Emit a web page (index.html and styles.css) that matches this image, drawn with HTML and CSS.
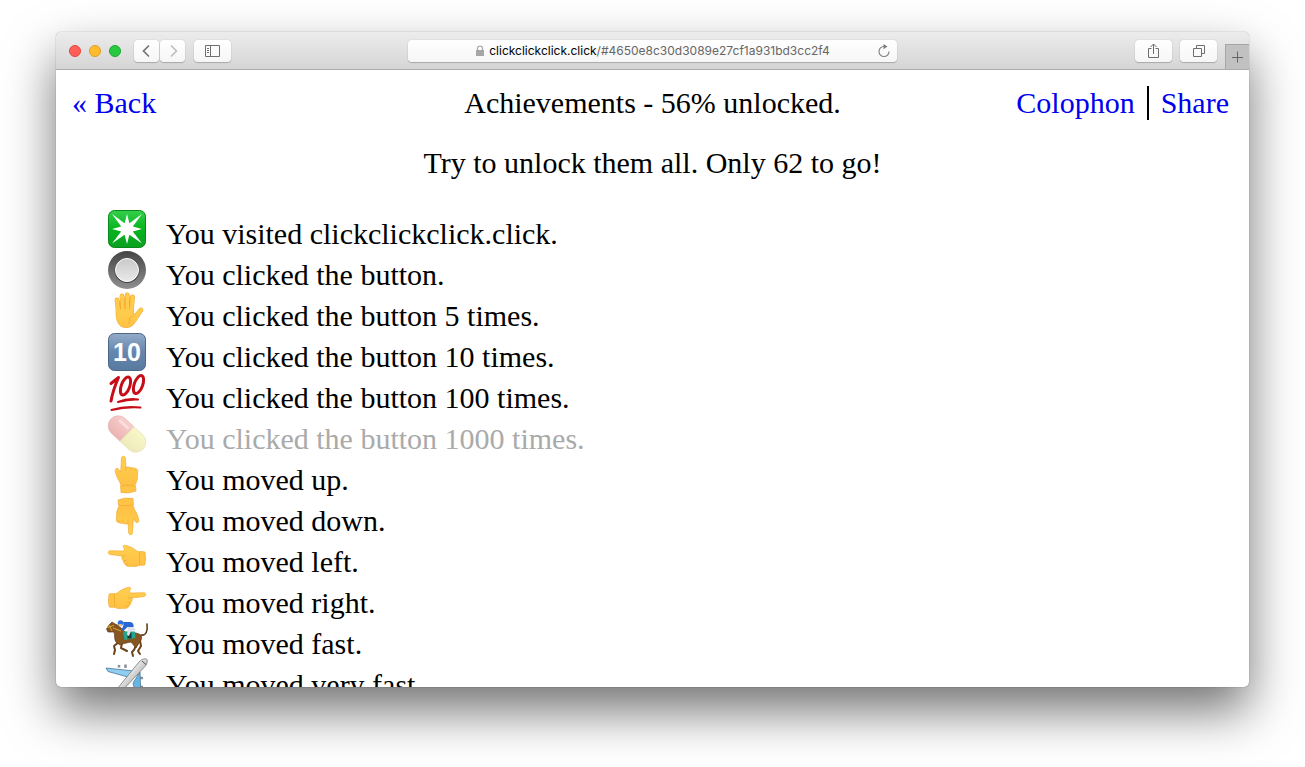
FILE: index.html
```html
<!DOCTYPE html>
<html lang="en">
<head>
  <meta charset="UTF-8" />
  <meta name="viewport" content="width=device-width, initial-scale=1.0">
  <title>Achievements</title>
  <link rel="stylesheet" href="styles.css">
</head>
<body>
  <div class="window">
    <!-- Browser toolbar -->
    <header class="toolbar">
      <div class="tools">
        <div class="lights">
          <span class="light red"></span>
          <span class="light yellow"></span>
          <span class="light green"></span>
        </div>
        <div class="history">
          <button class="tool small" aria-label="Back"><svg width="25" height="22" viewBox="0 0 25 22"><path d="M15 5.500L9.500 11l5.500 5.500" stroke="#6e6e6e" stroke-width="1.600"/></svg></button>
          <button class="tool small" aria-label="Forward"><svg width="25" height="22" viewBox="0 0 25 22"><path d="M11 5.500L16.500 11 11 16.500" stroke="#bdbdbd" stroke-width="1.600"/></svg></button>
        </div>
        <button class="tool" aria-label="Sidebar"><svg width="37" height="22" viewBox="0 0 37 22"><path d="M11.500 5.500h14v11h-14zM16.500 5.500v11M13 8.500h2M13 10.500h2M13 12.500h2" stroke="#6e6e6e"/></svg></button>
      </div>
      <button class="address">
        <svg width="10" height="12" viewBox="0 0 10 12"><path d="M2.500 6V3.500a2.500 2.500 0 0 1 5 0V6" stroke="#a6a6a6" stroke-width="1.200"/><path d="M1 5h8v6H1z" fill="#a6a6a6"/></svg>
        <span>clickclickclick.click<span class="path">/#4650e8c30d3089e27cf1a931bd3cc2f4</span></span>
        <svg class="reload" width="14" height="14" viewBox="0 0 14 14"><path d="M7 2.500a5 5 0 1 0 5 5" stroke="#7d7d7d" stroke-width="1.100"/><path d="M6.500 0l4 2.500-4 2.700z" fill="#7d7d7d"/></svg>
      </button>
      <div class="tools right">
        <button class="tool" aria-label="Share"><svg width="37" height="22" viewBox="0 0 37 22"><path d="M16.500 8.500h-3v9h10v-9h-3M18.500 14V4M15.500 7l3-3 3 3" stroke="#6e6e6e"/></svg></button>
        <button class="tool" aria-label="Tabs"><svg width="37" height="22" viewBox="0 0 37 22"><path d="M13.500 8.500h8v8h-8zM16.500 8V5.500h8v8H22" stroke="#6e6e6e"/></svg></button>
        <button class="new-tab" aria-label="New tab"><svg width="23" height="24" viewBox="0 0 23 24"><path d="M11.500 6.500v11M6 12.500h11" stroke="#666"/></svg></button>
      </div>
    </header>

    <!-- Page -->
    <main class="page">
      <div class="page-header">
        <a href="#back">« Back</a>
        <h1>Achievements - 56% unlocked.</h1>
        <nav>
          <a href="#colophon">Colophon</a>
          <span class="divider"></span>
          <a href="#share">Share</a>
        </nav>
      </div>
      <p class="intro">Try to unlock them all. Only 62 to go!</p>

      <ul class="achievements">
        <li>
          <svg class="icon" viewBox="0 0 44 41">
            <rect x="3.500" y="1.500" width="37" height="37" rx="6" fill="url(#green)" stroke="#078a1b"/>
            <path d="M22 5l2.400 9.200L37 5l-9.200 12.600L37 20l-9.200 2.400L37 34.500l-12.600-8.700L22 35l-2.400-9.200L7 34.500l9.200-12.100L7 20l9.200-2.400L7 5l12.600 9.200z" fill="#fff"/>
          </svg>
          <span>You visited clickclickclick.click.</span>
        </li>
        <li>
          <svg class="icon" viewBox="0 0 44 41">
            <circle cx="22" cy="20" r="19" fill="url(#ring)"/>
            <circle cx="22" cy="20.500" r="12.500" fill="#444"/>
            <circle cx="22" cy="20" r="11.500" fill="url(#knob)" stroke="#fff"/>
          </svg>
          <span>You clicked the button.</span>
        </li>
        <li>
          <svg class="icon" viewBox="0 0 44 41">
            <g stroke="#eda42a" stroke-width="4.800" stroke-linecap="round"><path d="M12 9l2 15M17 5l1 17M22.300 4v18M27.500 6L26 23M36 19l-6 7"/></g>
            <path d="M11 18c0 7 0 12 3.500 16 3 3.500 10 3.500 13.500 0 3-3 5.500-8 8.500-12.500L29 23l-1.500-5z" fill="url(#skin)" stroke="#eda42a" stroke-width=".6"/>
            <g stroke="#ffcb4d" stroke-width="4" stroke-linecap="round"><path d="M12 9l2 15M17 5l1 17M22.300 4v18M27.500 6L26 23M36 19l-6 7"/></g>
            <path d="M14.700 10l.8 8M19.700 6l.2 12M25 6l-.3 12M24 33c0-5 2-8 5-9" stroke="#eda42a" stroke-width=".7"/>
          </svg>
          <span>You clicked the button 5 times.</span>
        </li>
        <li>
          <svg class="icon" viewBox="0 0 44 41">
            <rect x="3.500" y="1.500" width="37" height="37" rx="6" fill="url(#blue)" stroke="#4a6788"/>
            <text class="ten" x="22" y="29" text-anchor="middle">10</text>
          </svg>
          <span>You clicked the button 10 times.</span>
        </li>
        <li>
          <svg class="icon" viewBox="0 0 44 41">
            <g stroke="#c70d17" stroke-linecap="round" stroke-linejoin="round">
              <path d="M6 10.500l7.500-6Q8 17 6 28" stroke-width="3"/>
              <ellipse cx="20.500" cy="13" rx="4.200" ry="9.500" transform="rotate(20 20.500 13)" stroke-width="3"/>
              <ellipse cx="33.500" cy="11.500" rx="4.200" ry="9.500" transform="rotate(20 33.500 11.500)" stroke-width="3"/>
              <path d="M13 29q10-4 20-2.500-9-.5-20 2.500M6.500 37q14-4.500 29-2.500-15-1-29 2.500" stroke-width="2"/>
            </g>
          </svg>
          <span>You clicked the button 100 times.</span>
        </li>
        <li class="locked">
          <svg class="icon" viewBox="0 0 44 41">
            <g transform="translate(22 20) rotate(43)">
              <path d="M0-10h-12a10 10 0 0 0 0 20H0z" fill="url(#pillred)" stroke="#b64a48" stroke-width=".7"/>
              <path d="M0-10h12a10 10 0 0 1 0 20H0z" fill="url(#pillyellow)" stroke="#b9b04a" stroke-width=".7"/>
              <path d="M-14-5h10" stroke="#fff" stroke-width="3" stroke-linecap="round" opacity=".4"/>
            </g>
          </svg>
          <span>You clicked the button 1000 times.</span>
        </li>
        <li>
          <svg class="icon" viewBox="0 0 44 41"><use href="#point-up"/></svg>
          <span>You moved up.</span>
        </li>
        <li>
          <svg class="icon" viewBox="0 0 44 41"><use href="#point-up" transform="rotate(180 22 20)"/></svg>
          <span>You moved down.</span>
        </li>
        <li>
          <svg class="icon" viewBox="0 0 44 41"><use href="#point-left"/></svg>
          <span>You moved left.</span>
        </li>
        <li>
          <svg class="icon" viewBox="0 0 44 41"><use href="#point-left" transform="translate(44 1) scale(-1 1)"/></svg>
          <span>You moved right.</span>
        </li>
        <li>
          <svg class="icon" viewBox="0 0 44 41">
            <path d="M36 16c5 1 7-4 6-11" stroke="#5e3b16" stroke-width="1.600" stroke-linecap="round"/>
            <path d="M14 23l-5 4 1 4-1 4M17 24l-1 5 6 3M32 24l-3 7-2 2 1 4M35 22l1 5-3 5 2 3" stroke="#6b431a" stroke-width="2" stroke-linecap="round" stroke-linejoin="round"/>
            <path d="M7 3l3 2c4 1 7 5 10 8 5 1 10 0 14 2 4 2 3 6 0 9l-3 5-5-6c-4 1-7 1-11 3l-4-3c-2-3-1-7-2-10l-6 0-1.500-3L4 6z" fill="#87551f" stroke="#5c3812" stroke-width=".7"/>
            <path d="M2 8.500l7-2M4 6l3 6M8 9l8 3" stroke="#d9a82b"/>
            <path d="M18 12.500h12l.5 6.500-11 2z" fill="#23a68b"/>
            <path d="M22.500 13.500h4v6h-4z" fill="#123c35"/>
            <path d="M23 7h5l3 4-5 1-2 5-2-1z" fill="#dfe1e8"/>
            <path d="M18 3h7c3 0 4 3 3.500 5h-6l-4 4-2-1 2-5z" fill="#2a67d5"/>
            <circle cx="15.500" cy="4" r="2.800" fill="#2d71de"/>
            <path d="M13.500 5h3.500l-1 2.500h-2z" fill="#f0bd79"/>
          </svg>
          <span>You moved fast.</span>
        </li>
        <li>
          <svg class="icon" viewBox="0 0 44 41">
            <path d="M14 7.500V5M20.500 8V4.500M38 18h-3M38 27h-3" stroke="#8a8f96" stroke-width="2.500"/>
            <path d="M1 8l28 3-6 6-20-5.500z" fill="#91cdf0" stroke="#487997" stroke-width=".8"/>
            <path d="M35 12l1 28h-4l-4-17z" fill="#67b5e5" stroke="#487997" stroke-width=".8"/>
            <path d="M42-.5c1 3-1 6-3 8L16 32l-7 4 3-7L34 2c3-3 6-4 8-2.500z" fill="url(#plane)" stroke="#777" stroke-width=".8"/>
            <path d="M37 1l4 3.500" stroke="#555"/>
          </svg>
          <span>You moved very fast.</span>
        </li>
      </ul>
    </main>
  </div>

  <!-- Shared icon shapes -->
  <svg class="defs" aria-hidden="true">
    <defs>
      <linearGradient id="green" x2="0" y2="1"><stop stop-color="#35cf4b"/><stop offset=".5" stop-color="#06b51d"/><stop offset="1" stop-color="#0aa021"/></linearGradient>
      <linearGradient id="ring" x2="0" y2="1"><stop stop-color="#444"/><stop offset="1" stop-color="#909090"/></linearGradient>
      <linearGradient id="knob" x2="0" y2="1"><stop stop-color="#c9c9c9"/><stop offset="1" stop-color="#e9e9e9"/></linearGradient>
      <linearGradient id="skin" x2="0" y2="1"><stop stop-color="#ffd04f"/><stop offset="1" stop-color="#ffc043"/></linearGradient>
      <linearGradient id="blue" x2="0" y2="1"><stop stop-color="#92abc8"/><stop offset=".5" stop-color="#6587ae"/><stop offset="1" stop-color="#587a9f"/></linearGradient>
      <linearGradient id="pillred" x2="0" y2="1"><stop stop-color="#f08783"/><stop offset="1" stop-color="#cf4441"/></linearGradient>
      <linearGradient id="pillyellow" x2="0" y2="1"><stop stop-color="#f0ed78"/><stop offset="1" stop-color="#d5cc55"/></linearGradient>
      <linearGradient id="plane" x2="1" y2="1"><stop offset=".3" stop-color="#fff"/><stop offset=".7" stop-color="#aaa"/></linearGradient>
      <g id="point-up" stroke="#eda42a" stroke-width=".6">
        <path d="M15.800 15L16.500 3c.2-2.300 3.600-2.300 3.800 0l.7 9.500c2-.8 4-.6 5.200.3 2-.3 3.500 0 4 .8 1.800 0 2.600 1 2.500 3l-.5 8-2.200 6H16l-1.500-4c-2-3-4-7.600-4.300-11 0-2.500 2.600-3 3.600-1l1.500 2.400z" fill="url(#skin)"/>
        <path d="M15.500 31q7.500-1.500 15 0l.5 5q-7 3-15 1.500z" fill="#ffc445"/>
        <path d="M21 12.500v3M26.200 13v2.500M30.200 14v2"/>
      </g>
      <g id="point-left" stroke="#eda42a" stroke-width=".6">
        <path d="M19 14l-14-.3c-2.300 0-2.300 3.400 0 3.800L17 19c-.6 2 0 3.500 1.200 4.500 0 2 .8 3 2 3.500.5 1.600 1.500 2.300 3 2.300l8 .2 4-1.500V15l-3-.7c-4-3.500-8-5.300-12-6-2.300-.3-2.700 2-.7 3z" fill="url(#skin)"/>
        <path d="M34.500 14.700q3-.5 5.500.3 1.500 7-.2 13-3 .8-5.300 0z" fill="#ffc445"/>
        <path d="M17 19h4M18.200 23.500h3.300M20.200 27h3"/>
      </g>
    </defs>
  </svg>
</body>
</html>
```
FILE: styles.css
```css
* {
  box-sizing: border-box;
}
body {
  margin: 0;
  padding: 32px 56px 80px;
  height: 100vh;
  background: #fff;
  color: #000;
  font-family: "Liberation Serif", "Times New Roman", serif;
  font-size: 30px;
  line-height: 34px;
  overflow: hidden;
}
button {
  margin: 0;
  padding: 0;
  border: 0;
  font: inherit;
}
svg {
  display: block;
  fill: none;
}
.window {
  height: 100%;
  display: flex;
  flex-direction: column;
  overflow: hidden;
  border-radius: 5px;
  background: #fff;
  box-shadow: 0 0 1px rgba(0,0,0,0.6), 0 24px 50px rgba(0,0,0,0.55);
}

/* toolbar */
.toolbar {
  flex: none;
  display: grid;
  grid-template-columns: 1fr 41% 1fr;
  align-items: center;
  height: 38px;
  border-bottom: 1px solid #acacac;
  background: linear-gradient(#ececec, #d5d5d5);
}
.tools {
  display: flex;
  align-items: center;
  gap: 9px;
  padding-left: 13px;
}
.tools.right {
  align-self: stretch;
  justify-content: flex-end;
  gap: 8px;
  padding-left: 0;
}
.lights {
  display: flex;
  gap: 8px;
  margin-right: 4px;
}
.light {
  width: 12px;
  height: 12px;
  border-radius: 50%;
}
.red {
  background: #ff5f57;
  border: 1px solid #e2463f;
}
.yellow {
  background: #ffbd2e;
  border: 1px solid #e09e24;
}
.green {
  background: #28c940;
  border: 1px solid #18ab29;
}
.history {
  display: flex;
  gap: 1px;
}
.tool, .address {
  height: 22px;
  border-radius: 4px;
  background: linear-gradient(#fff, #f6f6f6);
  box-shadow: 0 0 1px rgba(0,0,0,0.3), 0 1px 1px rgba(0,0,0,0.2);
}
.tool {
  width: 37px;
}
.tool.small {
  width: 25px;
}
.address {
  position: relative;
  display: flex;
  align-items: center;
  justify-content: center;
  gap: 4px;
  font-family: Inter, sans-serif;
  font-size: 12px;
  line-height: 22px;
  color: #000;
}
.path {
  color: #666;
}
.reload {
  position: absolute;
  right: 6px;
  top: 4px;
}
.new-tab {
  align-self: flex-end;
  height: 25px;
  border-top: 1px solid #a5a5a5;
  border-left: 1px solid #a5a5a5;
  background: #c1c1c1;
}

/* page */
.page {
  flex: 1;
  min-height: 0;
  overflow: hidden;
  padding: 16px 16px 0;
}
a {
  color: #0000ee;
  text-decoration: none;
}
.page-header {
  display: grid;
  grid-template-columns: 1fr auto 1fr;
  align-items: center;
}
h1 {
  margin: 0;
  font-size: 30px;
  font-weight: normal;
}
nav {
  display: flex;
  justify-content: flex-end;
  gap: 12px;
  padding-right: 4px;
}
.divider {
  width: 2px;
  background: #000;
}
.intro {
  margin: 26px 0 29px;
  text-align: center;
}
.achievements {
  list-style: none;
  margin: 0;
  padding: 0 0 0 33px;
}
.achievements li {
  display: flex;
  gap: 17px;
  height: 41px;
}
.achievements li span {
  padding-top: 8px;
}
.icon {
  flex: none;
  width: 44px;
  height: 41px;
  overflow: visible;
}
.locked {
  color: #aaa;
}
.locked .icon {
  opacity: 0.4;
}
.ten {
  font: bold 25px "Liberation Sans", Arial, sans-serif;
  fill: #fff;
}
.defs {
  position: absolute;
  width: 0;
  height: 0;
}
```
